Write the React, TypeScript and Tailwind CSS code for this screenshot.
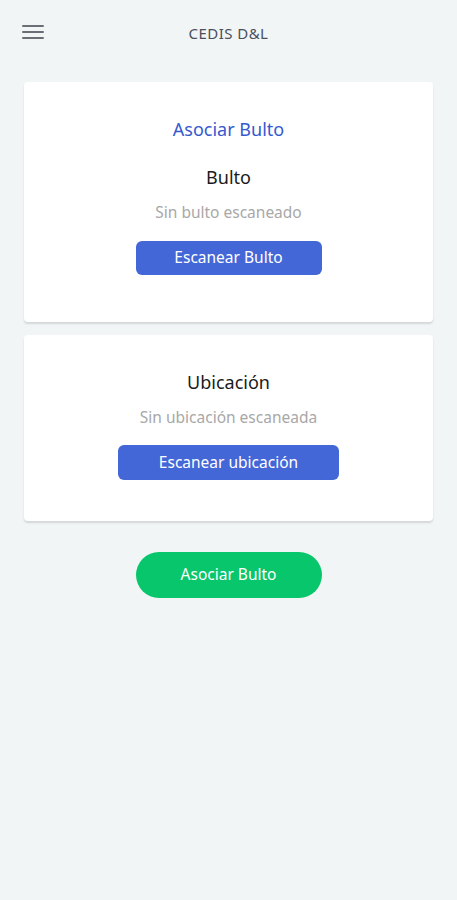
import { useState } from "react";

function Hamburger() {
  return (
    <svg width="22" height="16" viewBox="0 0 22 16" aria-hidden>
      <rect x="0" y="1" width="22" height="2" rx="1" fill="#6b6f75" />
      <rect x="0" y="7" width="22" height="2" rx="1" fill="#6b6f75" />
      <rect x="0" y="13" width="22" height="2" rx="1" fill="#6b6f75" />
    </svg>
  );
}

export default function App() {
  const [bulto] = useState<string | null>(null);
  const [ubicacion] = useState<string | null>(null);

  return (
    <div
      className="min-h-[900px] w-full bg-[#f1f5f6]"
      style={{ fontFamily: '"Noto Sans", "Open Sans", sans-serif' }}
    >
      <header className="relative flex h-[66px] items-center justify-center">
        <button className="absolute left-[22px] top-[24px]">
          <Hamburger />
        </button>
        <h1 className="text-[15px] leading-[20px] tracking-[0.03em] text-[#4a4f5c]">CEDIS D&amp;L</h1>
      </header>

      <main className="flex flex-col gap-[13px] px-[24px] pt-[16px]">
        <section className="flex h-[240px] flex-col items-center rounded-[4px] bg-white pt-[35px] shadow-[0_2px_2px_rgba(0,0,0,0.12)]">
          <h2 className="text-[18px] leading-[24px] text-[#3659d0]">Asociar Bulto</h2>
          <p className="mt-[24px] text-[18px] leading-[24px] text-[#1b1b1b]">Bulto</p>
          <p className="mt-[13px] text-[15.5px] leading-[20px] text-[#a8a8a8]">
            {bulto ?? "Sin bulto escaneado"}
          </p>
          <button className="mt-[19px] h-[34px] w-[186px] rounded-[6px] bg-[#4467d8] text-[15.5px] text-white">
            Escanear Bulto
          </button>
        </section>

        <section className="flex h-[186px] flex-col items-center rounded-[4px] bg-white pt-[35px] shadow-[0_2px_2px_rgba(0,0,0,0.12)]">
          <p className="text-[18px] leading-[24px] text-[#1b1b1b]">Ubicación</p>
          <p className="mt-[13px] text-[15.5px] leading-[20px] text-[#a8a8a8]">
            {ubicacion ?? "Sin ubicación escaneada"}
          </p>
          <button className="mt-[18px] h-[35px] w-[221px] rounded-[6px] bg-[#4467d8] text-[15.5px] text-white">
            Escanear ubicación
          </button>
        </section>

        <div className="flex justify-center pt-[18px]">
          <button className="h-[46px] w-[186px] rounded-full bg-[#08c66b] text-[15.5px] text-white">
            Asociar Bulto
          </button>
        </div>
      </main>
    </div>
  );
}
